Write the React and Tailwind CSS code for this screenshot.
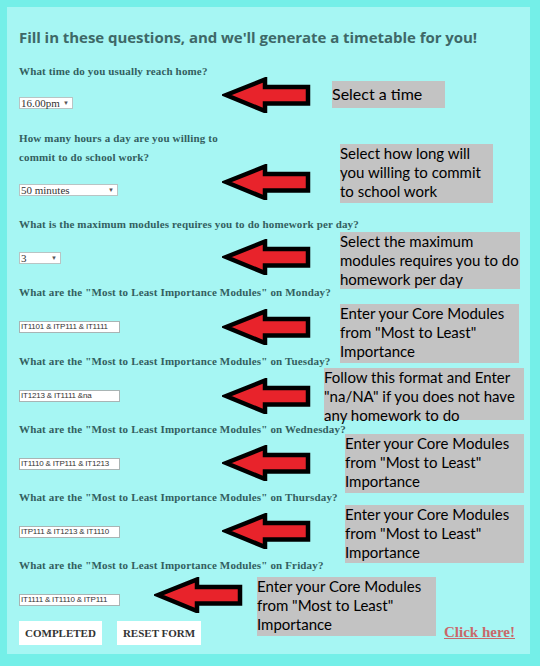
import React from 'react';

const QUESTION = 'font-["Liberation_Serif",serif] font-bold text-[11px] leading-[14px] tracking-[0.15px] text-[#335f5f]';
const NOTE = 'absolute bg-[#c3c3c3] text-black font-["Lato",sans-serif] text-[15px] leading-[19px]';

const days = [
  { day: 'Monday', value: 'IT1101 & ITP111 & IT1111', q: 'mt-[21px]', i: 'mt-[22px]' },
  { day: 'Tuesday', value: 'IT1213 & IT1111 &na', q: 'mt-[21px]', i: 'mt-[22px]' },
  { day: 'Wednesday', value: 'IT1110 & ITP111 & IT1213', q: 'mt-[20px]', i: 'mt-[22px]' },
  { day: 'Thursday', value: 'ITP111 & IT1213 & IT1110', q: 'mt-[20px]', i: 'mt-[22px]' },
  { day: 'Friday', value: 'IT1111 & IT1110 & ITP111', q: 'mt-[20px]', i: 'mt-[22px]' },
];

const arrows = [
  { x: 222, y: 95 },
  { x: 222, y: 182 },
  { x: 222, y: 257 },
  { x: 222, y: 327 },
  { x: 222, y: 396 },
  { x: 222, y: 463 },
  { x: 222, y: 531 },
  { x: 154, y: 595 },
];

function Arrow({ x, y }) {
  return (
    <svg
      className="absolute"
      style={{ left: x, top: y - 18 }}
      width="90"
      height="36"
      viewBox="0 0 90 36"
    >
      <polygon
        points="4,18 43,2.5 43,10 86,10 86,26.5 43,26.5 43,34"
        fill="#e8232b"
        stroke="#000"
        strokeWidth="4.5"
        strokeLinejoin="miter"
      />
    </svg>
  );
}

function FakeSelect({ value, width }) {
  return (
    <div
      className={`${width} h-[12px] bg-white border border-[#b9c4c4] flex items-center justify-between pl-[1px] pr-[3px] font-["Liberation_Serif",serif] text-[11px] leading-none text-[#333]`}
    >
      <span>{value}</span>
      <span className="text-[6px] text-[#555]">▼</span>
    </div>
  );
}

function FakeInput({ value, className }) {
  return (
    <div
      className={`${className} w-[101px] h-[12px] bg-white border border-[#a9b4b4] flex items-center pl-[1px] font-["Liberation_Sans",sans-serif] text-[8px] leading-none tracking-[-0.2px] text-[#333] whitespace-nowrap overflow-hidden`}
    >
      {value}
    </div>
  );
}

export default function App() {
  return (
    <div className="relative w-[540px] h-[666px] bg-[#74efe8] pt-[7px] pl-[7px] pr-[10px] pb-[12px]">
      <div className="h-full bg-[#a6f6f3] pl-[12px] pt-[20px]">
        <h1 className='font-["Open_Sans",sans-serif] font-bold text-[15px] leading-[20px] tracking-[-0.05px] text-[#3e6867]'>
          Fill in these questions, and we'll generate a timetable for you!
        </h1>

        <p className={`${QUESTION} mt-[17px]`}>What time do you usually reach home?</p>
        <div className="mt-[19px]">
          <FakeSelect value="16.00pm" width="w-[54px]" />
        </div>

        <p className={`${QUESTION} mt-[20px] leading-[19px]`}>
          How many hours a day are you willing to
          <br />
          commit to do school work?
        </p>
        <div className="mt-[17px]">
          <FakeSelect value="50 minutes" width="w-[99px]" />
        </div>

        <p className={`${QUESTION} mt-[21px]`}>What is the maximum modules requires you to do homework per day?</p>
        <div className="mt-[21px]">
          <FakeSelect value="3" width="w-[42px]" />
        </div>

        {days.map((d) => (
          <div key={d.day}>
            <p className={`${QUESTION} ${d.q}`}>
              What are the "Most to Least Importance Modules" on {d.day}?
            </p>
            <FakeInput value={d.value} className={d.i} />
          </div>
        ))}

        <div className="mt-[15px] flex items-center gap-[15px]">
          <button className='h-[24px] px-[6px] bg-white font-["Liberation_Serif",serif] font-bold text-[11px] text-[#333]'>
            COMPLETED
          </button>
          <button className='h-[24px] px-[6px] bg-white font-["Liberation_Serif",serif] font-bold text-[11px] text-[#333]'>
            RESET FORM
          </button>
        </div>
      </div>

      {arrows.map((a, i) => (
        <Arrow key={i} x={a.x} y={a.y} />
      ))}

      <div className={`${NOTE} left-[332px] top-[81px] w-[113px] h-[27px] pt-[3px] text-[16px]`}>Select a time</div>
      <div className={`${NOTE} left-[340px] top-[144px] w-[153px] h-[59px]`}>
        Select how long will
        <br />
        you willing to commit
        <br />
        to school work
      </div>
      <div className={`${NOTE} left-[340px] top-[232px] w-[180px] h-[57px]`}>
        Select the maximum
        <br />
        modules requires you to do
        <br />
        homework per day
      </div>
      <div className={`${NOTE} left-[340px] top-[304px] w-[179px] h-[59px]`}>
        Enter your Core Modules
        <br />
        from "Most to Least"
        <br />
        Importance
      </div>
      <div className={`${NOTE} left-[324px] top-[368px] w-[200px] h-[52px] leading-[17.5px]`}>
        Follow this format and Enter
        <br />
        "na/NA" if you does not have
        <br />
        any homework to do
      </div>
      <div className={`${NOTE} left-[345px] top-[434px] w-[179px] h-[59px]`}>
        Enter your Core Modules
        <br />
        from "Most to Least"
        <br />
        Importance
      </div>
      <div className={`${NOTE} left-[345px] top-[505px] w-[179px] h-[58px]`}>
        Enter your Core Modules
        <br />
        from "Most to Least"
        <br />
        Importance
      </div>
      <div className={`${NOTE} left-[257px] top-[577px] w-[179px] h-[59px]`}>
        Enter your Core Modules
        <br />
        from "Most to Least"
        <br />
        Importance
      </div>

      <a
        href="#"
        className='absolute left-[444px] top-[621px] font-["Liberation_Serif",serif] font-bold text-[15px] text-[#c9686a] underline'
      >
        Click here!
      </a>
    </div>
  );
}
